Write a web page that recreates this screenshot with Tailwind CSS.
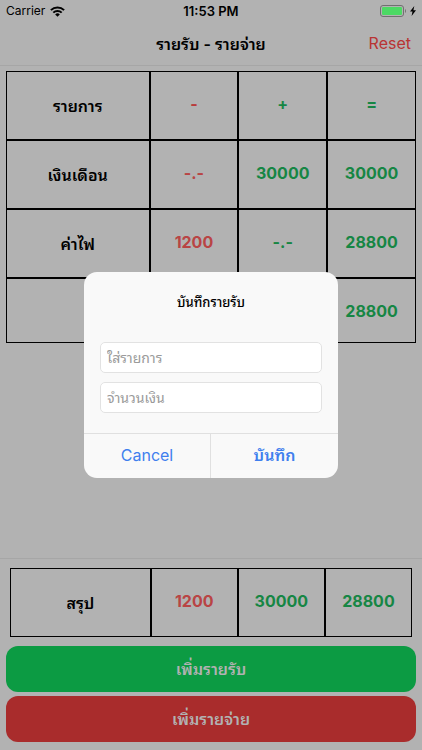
<!DOCTYPE html>
<html lang="th">
<head>
<meta charset="utf-8">
<meta name="viewport" content="width=device-width, initial-scale=1">
<title>รายรับ - รายจ่าย</title>
<script src="https://cdn.jsdelivr.net/npm/@tailwindcss/browser@4"></script>
</head>
<body class="relative flex min-h-screen flex-col bg-[#b2b2b2] font-['Inter','Thonburi','Noto_Sans_Thai_Looped','Loma','Garuda','Waree',sans-serif] text-black">
  <header class="border-b border-[#a6a6a6]">
    <div class="grid h-[22px] grid-cols-3 items-center px-[6px] text-[12px] leading-[22px]">
      <div class="flex items-center gap-[5px]">
        <span>Carrier</span>
        <svg class="h-[11px] w-[15px]" viewBox="0 0 15 11" fill="none" stroke="currentColor" stroke-width="2" aria-hidden="true">
          <path d="M0.9 4.1a9.4 9.4 0 0 1 13.2 0"/>
          <path d="M3.3 6.6a6 6 0 0 1 8.4 0"/>
          <path d="M7.5 10.8 5.2 8.4a3.3 3.3 0 0 1 4.6 0z" fill="currentColor" stroke="none"/>
        </svg>
      </div>
      <span class="text-center text-[13px] font-semibold">11:53 PM</span>
      <div class="flex items-center justify-end gap-[3px]">
        <svg class="h-[12px] w-[27px]" viewBox="0 0 27 12" aria-hidden="true">
          <rect x="0.5" y="0.5" width="23" height="11" rx="2.5" fill="none" stroke="#707070"/>
          <rect x="2" y="2" width="20" height="8" rx="1.2" fill="#4cd964"/>
          <path d="M25 4v4c1.3-.5 1.3-3.5 0-4z" fill="#707070"/>
        </svg>
        <svg class="h-[10px] w-[6px]" viewBox="0 0 6 10" aria-hidden="true"><path d="M4.3 0 0 5.6h2.5L1.6 10 6 4.2H3.4z"/></svg>
      </div>
    </div>
    <div class="grid h-[43px] grid-cols-[1fr_auto_1fr] items-center px-[11px]">
      <h1 class="col-start-2 text-[16px] font-semibold">รายรับ - รายจ่าย</h1>
      <button type="button" class="justify-self-end pb-[2px] text-[16px] text-[#b93434]">Reset</button>
    </div>
  </header>

  <main class="flex-1 px-[6px] pt-[5px]">
    <table class="w-full table-fixed border-separate border-spacing-0 text-center text-[16px] font-bold [&_td]:border [&_td]:border-black [&_td]:pb-[4px] [&_th]:border [&_th]:border-black">
      <thead>
        <tr class="h-[69px]">
          <th scope="col" class="w-[35%] font-semibold">รายการ</th>
          <th scope="col" class="pb-[4px] text-[#b93c3c]">-</th>
          <th scope="col" class="pb-[4px] text-[#168644]">+</th>
          <th scope="col" class="pb-[4px] text-[#168644]">=</th>
        </tr>
      </thead>
      <tbody>
        <tr class="h-[69px]">
          <th scope="row" class="font-semibold">เงินเดือน</th>
          <td class="text-[#b94444]">-.-</td>
          <td class="text-[#168644]">30000</td>
          <td class="text-[#168644]">30000</td>
        </tr>
        <tr class="h-[69px]">
          <th scope="row" class="font-semibold">ค่าไฟ</th>
          <td class="text-[#b94444]">1200</td>
          <td class="text-[#168644]">-.-</td>
          <td class="text-[#168644]">28800</td>
        </tr>
      </tbody>
      <tfoot>
        <tr class="h-[65px]">
          <th></th>
          <th></th>
          <th></th>
          <th class="text-[#168644]">28800</th>
        </tr>
      </tfoot>
    </table>
  </main>

  <footer class="border-t border-[#a6a6a6] px-[6px] pt-[9px] pb-[8px]">
    <div class="px-[4px]">
      <table class="w-full table-fixed border-separate border-spacing-0 text-center text-[16px] font-bold [&_td]:border [&_td]:border-black [&_td]:pb-[4px] [&_th]:border [&_th]:border-black">
        <tbody>
          <tr class="h-[69px]">
            <th scope="row" class="w-[35%] font-semibold">สรุป</th>
            <td class="text-[#b94444]">1200</td>
            <td class="text-[#168644]">30000</td>
            <td class="text-[#168644]">28800</td>
          </tr>
        </tbody>
      </table>
    </div>
    <div class="mt-[9px] flex flex-col gap-[4px] text-[16px] font-semibold text-[#b2b2b2]">
      <button type="button" class="h-[46px] rounded-[12px] bg-[#0c9b43]">เพิ่มรายรับ</button>
      <button type="button" class="h-[46px] rounded-[12px] bg-[#a92c2c]">เพิ่มรายจ่าย</button>
    </div>
  </footer>

  <div class="absolute inset-0 flex items-center justify-center">
    <form role="dialog" aria-labelledby="dialog-title" class="w-[254px] overflow-hidden rounded-[13px] bg-[#f9f9f9]">
      <h2 id="dialog-title" class="pt-[20px] text-center text-[13px] leading-[20px] font-medium">บันทึกรายรับ</h2>
      <div class="flex flex-col gap-[9px] px-[16px] pt-[30px] pb-[20px] text-[14px]">
        <input type="text" aria-label="ใส่รายการ" placeholder="ใส่รายการ" class="h-[31px] w-full rounded-[5px] border border-[#e2e2e2] bg-white px-[6px] placeholder:text-[#9a9a9a]">
        <input type="text" inputmode="numeric" aria-label="จำนวนเงิน" placeholder="จำนวนเงิน" class="h-[31px] w-full rounded-[5px] border border-[#e2e2e2] bg-white px-[6px] placeholder:text-[#9a9a9a]">
      </div>
      <div class="grid h-[45px] grid-cols-2 border-t border-[#e0e0e0] text-[16px] text-[#3f7fee]">
        <button type="button" class="border-r border-[#e0e0e0] pb-[2px]">Cancel</button>
        <button type="submit" class="pb-[2px] font-semibold">บันทึก</button>
      </div>
    </form>
  </div>
</body>
</html>
